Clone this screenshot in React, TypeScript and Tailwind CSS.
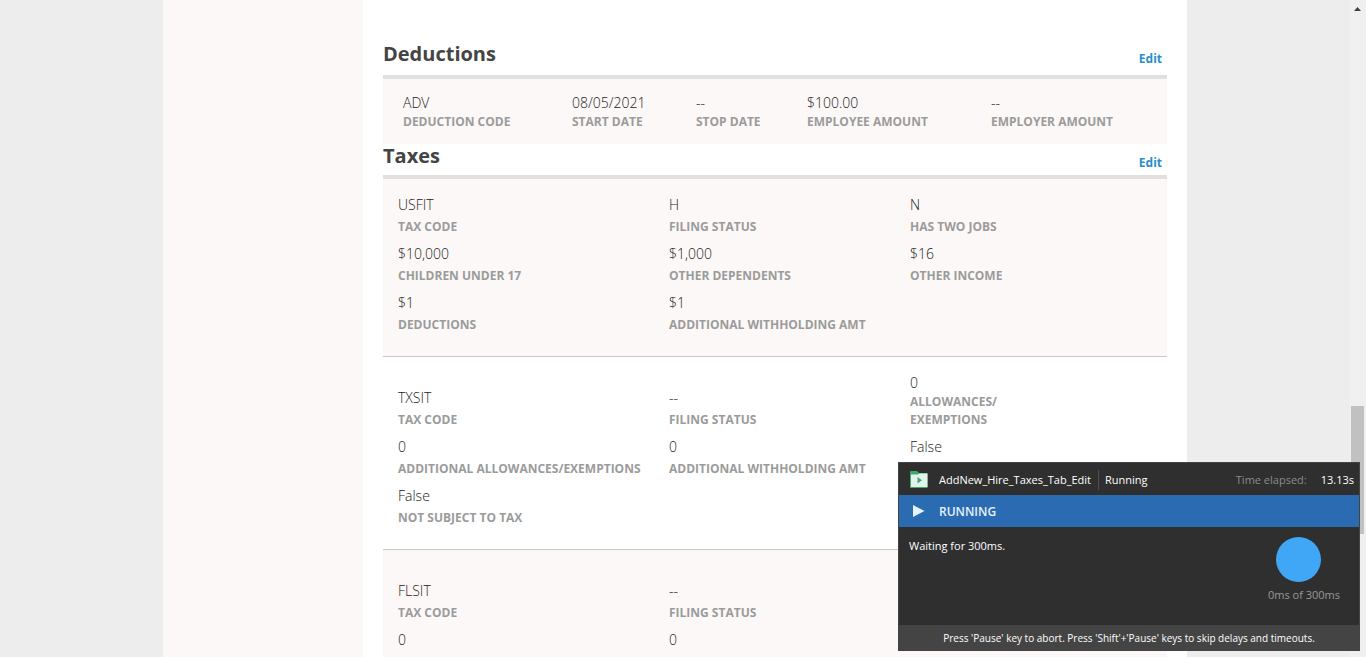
import React from "react";

type Field = { value: string; label?: string; wrapped?: boolean };

const deductionFields: Field[] = [
  { value: "ADV", label: "Deduction Code" },
  { value: "08/05/2021", label: "Start Date" },
  { value: "--", label: "Stop Date" },
  { value: "$100.00", label: "Employee Amount" },
  { value: "--", label: "Employer Amount" },
];

const federal: Field[] = [
  { value: "USFIT", label: "Tax Code" },
  { value: "H", label: "Filing Status" },
  { value: "N", label: "Has Two Jobs" },
  { value: "$10,000", label: "Children Under 17" },
  { value: "$1,000", label: "Other Dependents" },
  { value: "$16", label: "Other Income" },
  { value: "$1", label: "Deductions" },
  { value: "$1", label: "Additional Withholding Amt" },
];

const stateFields = (code: string): Field[] => [
  { value: code, label: "Tax Code" },
  { value: "--", label: "Filing Status" },
  { value: "0", label: "Allowances/ Exemptions", wrapped: true },
  { value: "0", label: "Additional Allowances/Exemptions" },
  { value: "0", label: "Additional Withholding Amt" },
  { value: "False" },
  { value: "False", label: "Not Subject To Tax" },
];

function FieldItem({ field, tight }: { field: Field; tight?: boolean }) {
  return (
    <div
      className={`flex flex-col ${field.label ? "self-end" : "self-start"} ${tight ? "gap-px" : "gap-1"}`}
    >
      {field.label && (
        <dt
          className={`order-last text-xs leading-[18px] font-bold text-[#9b9b9b] uppercase ${
            field.wrapped ? "w-24" : "whitespace-nowrap"
          }`}
        >
          {field.label}
        </dt>
      )}
      <dd className="text-sm leading-[18px] font-light text-[#222]">{field.value}</dd>
    </div>
  );
}

function SectionHeader({ title, className, gap }: { title: string; className: string; gap: string }) {
  return (
    <header className={`flex justify-between border-b-4 border-[#e2dfdf] pr-[5px] ${className}`}>
      <h2 className={`text-xl leading-6 font-bold text-[#444] ${gap}`}>{title}</h2>
      <a href="#edit" className="self-end text-xs leading-[18px] font-bold text-[#2a8fc7]">
        Edit
      </a>
    </header>
  );
}

function TaxBlock({ fields, shaded }: { fields: Field[]; shaded?: boolean }) {
  return (
    <dl
      className={`grid grid-cols-[271fr_241fr_257fr] gap-y-[9px] border-b border-[#cdc8cb] pt-[17px] pb-[22px] pl-[15px] ${
        shaded ? "bg-[#fcf8f7]" : "bg-white"
      }`}
    >
      {fields.map((f, i) => (
        <FieldItem key={i} field={f} tight={f.wrapped} />
      ))}
    </dl>
  );
}

function ScrollTrack() {
  return (
    <div className="w-4 shrink-0 bg-[#f0f0f0]" aria-hidden="true">
      <svg className="mt-1 ml-1 block" width="8" height="8" viewBox="0 0 8 8">
        <path d="M0 7 L3.5 3 L7 7 Z" fill="#404040" />
      </svg>
      <div className="mt-[394px] ml-px h-32 w-[13px] bg-[#c1c1c1]" />
    </div>
  );
}

function RunnerPanel() {
  return (
    <aside className="fixed right-1.5 bottom-1.5 w-[462px] border border-[#444] bg-[#2f2f2f] font-['Open_Sans','Noto_Sans',sans-serif] text-[11px] text-white">
      <div className="flex h-8 items-center pt-0.5 pr-[5px] pl-[11px]">
        <svg className="mr-[11px] block shrink-0" width="18" height="18" viewBox="0 0 18 18">
          <path d="M0 1 Q0 0 1 0 H7 L9 2 H17.5 V17 H0 Z" fill="#41a872" />
          <path d="M1 3.5 H8 L9 2.5 H17.5 V16 H1 Z" fill="#e3f3e9" />
          <path d="M7.5 6 L12 9.2 L7.5 12.4 Z" fill="#41a872" />
        </svg>
        <span>AddNew_Hire_Taxes_Tab_Edit</span>
        <span className="ml-[7px] flex h-5 items-center border-l border-[#505050] pl-1.5">Running</span>
        <span className="ml-auto text-[#8c8c8c]">Time elapsed:</span>
        <span className="ml-3.5">13.13s</span>
      </div>
      <div className="flex h-8 items-center gap-3.5 bg-[#2a6bb1] pt-0.5 pl-3.5 text-xs font-semibold text-[#e6f2ff]">
        <svg className="mb-0.5" width="12" height="12" viewBox="0 0 12 12">
          <path d="M0 0 L11.5 6 L0 12 Z" fill="#e6f2ff" />
        </svg>
        RUNNING
      </div>
      <div className="flex h-[98px] justify-between pt-2.5 pr-[15px] pl-2.5">
        <p className="leading-[18px]">Waiting for 300ms.</p>
        <div className="flex w-[76px] flex-col gap-1 text-[#999]">
          <div className="ml-2 size-[45px] rounded-full bg-[#40a7f7]" />
          <span className="leading-[18px]">0ms of 300ms</span>
        </div>
      </div>
      <p className="h-[25px] bg-[#444] text-center text-[10px] leading-[26px]">
        Press 'Pause' key to abort. Press 'Shift'+'Pause' keys to skip delays and timeouts.
      </p>
    </aside>
  );
}

export default function App() {
  return (
    <div className="flex h-screen overflow-hidden bg-[#ededed] font-['Open_Sans',sans-serif]">
      <div className="flex min-w-0 flex-1 justify-center">
        <div className="flex w-full max-w-[1024px]">
          <div className="w-[200px] shrink-0 bg-[#fcf8f7]" />
          <main className="min-w-0 flex-1 bg-white px-5">
            <section>
              <SectionHeader title="Deductions" className="pt-[42px] pb-[7px]" gap="mb-0.5" />
              <dl className="grid grid-cols-[169fr_124fr_111fr_184fr_176fr] bg-[#fcf8f7] pt-[15px] pb-[13px] pl-5">
                {deductionFields.map((f) => (
                  <FieldItem key={f.label} field={f} tight />
                ))}
              </dl>
            </section>
            <section>
              <SectionHeader title="Taxes" className="pb-[3px]" gap="mb-1" />
              <TaxBlock fields={federal} shaded />
              <TaxBlock fields={stateFields("TXSIT")} />
              <TaxBlock fields={stateFields("FLSIT")} shaded />
            </section>
          </main>
        </div>
      </div>
      <ScrollTrack />
      <RunnerPanel />
    </div>
  );
}
